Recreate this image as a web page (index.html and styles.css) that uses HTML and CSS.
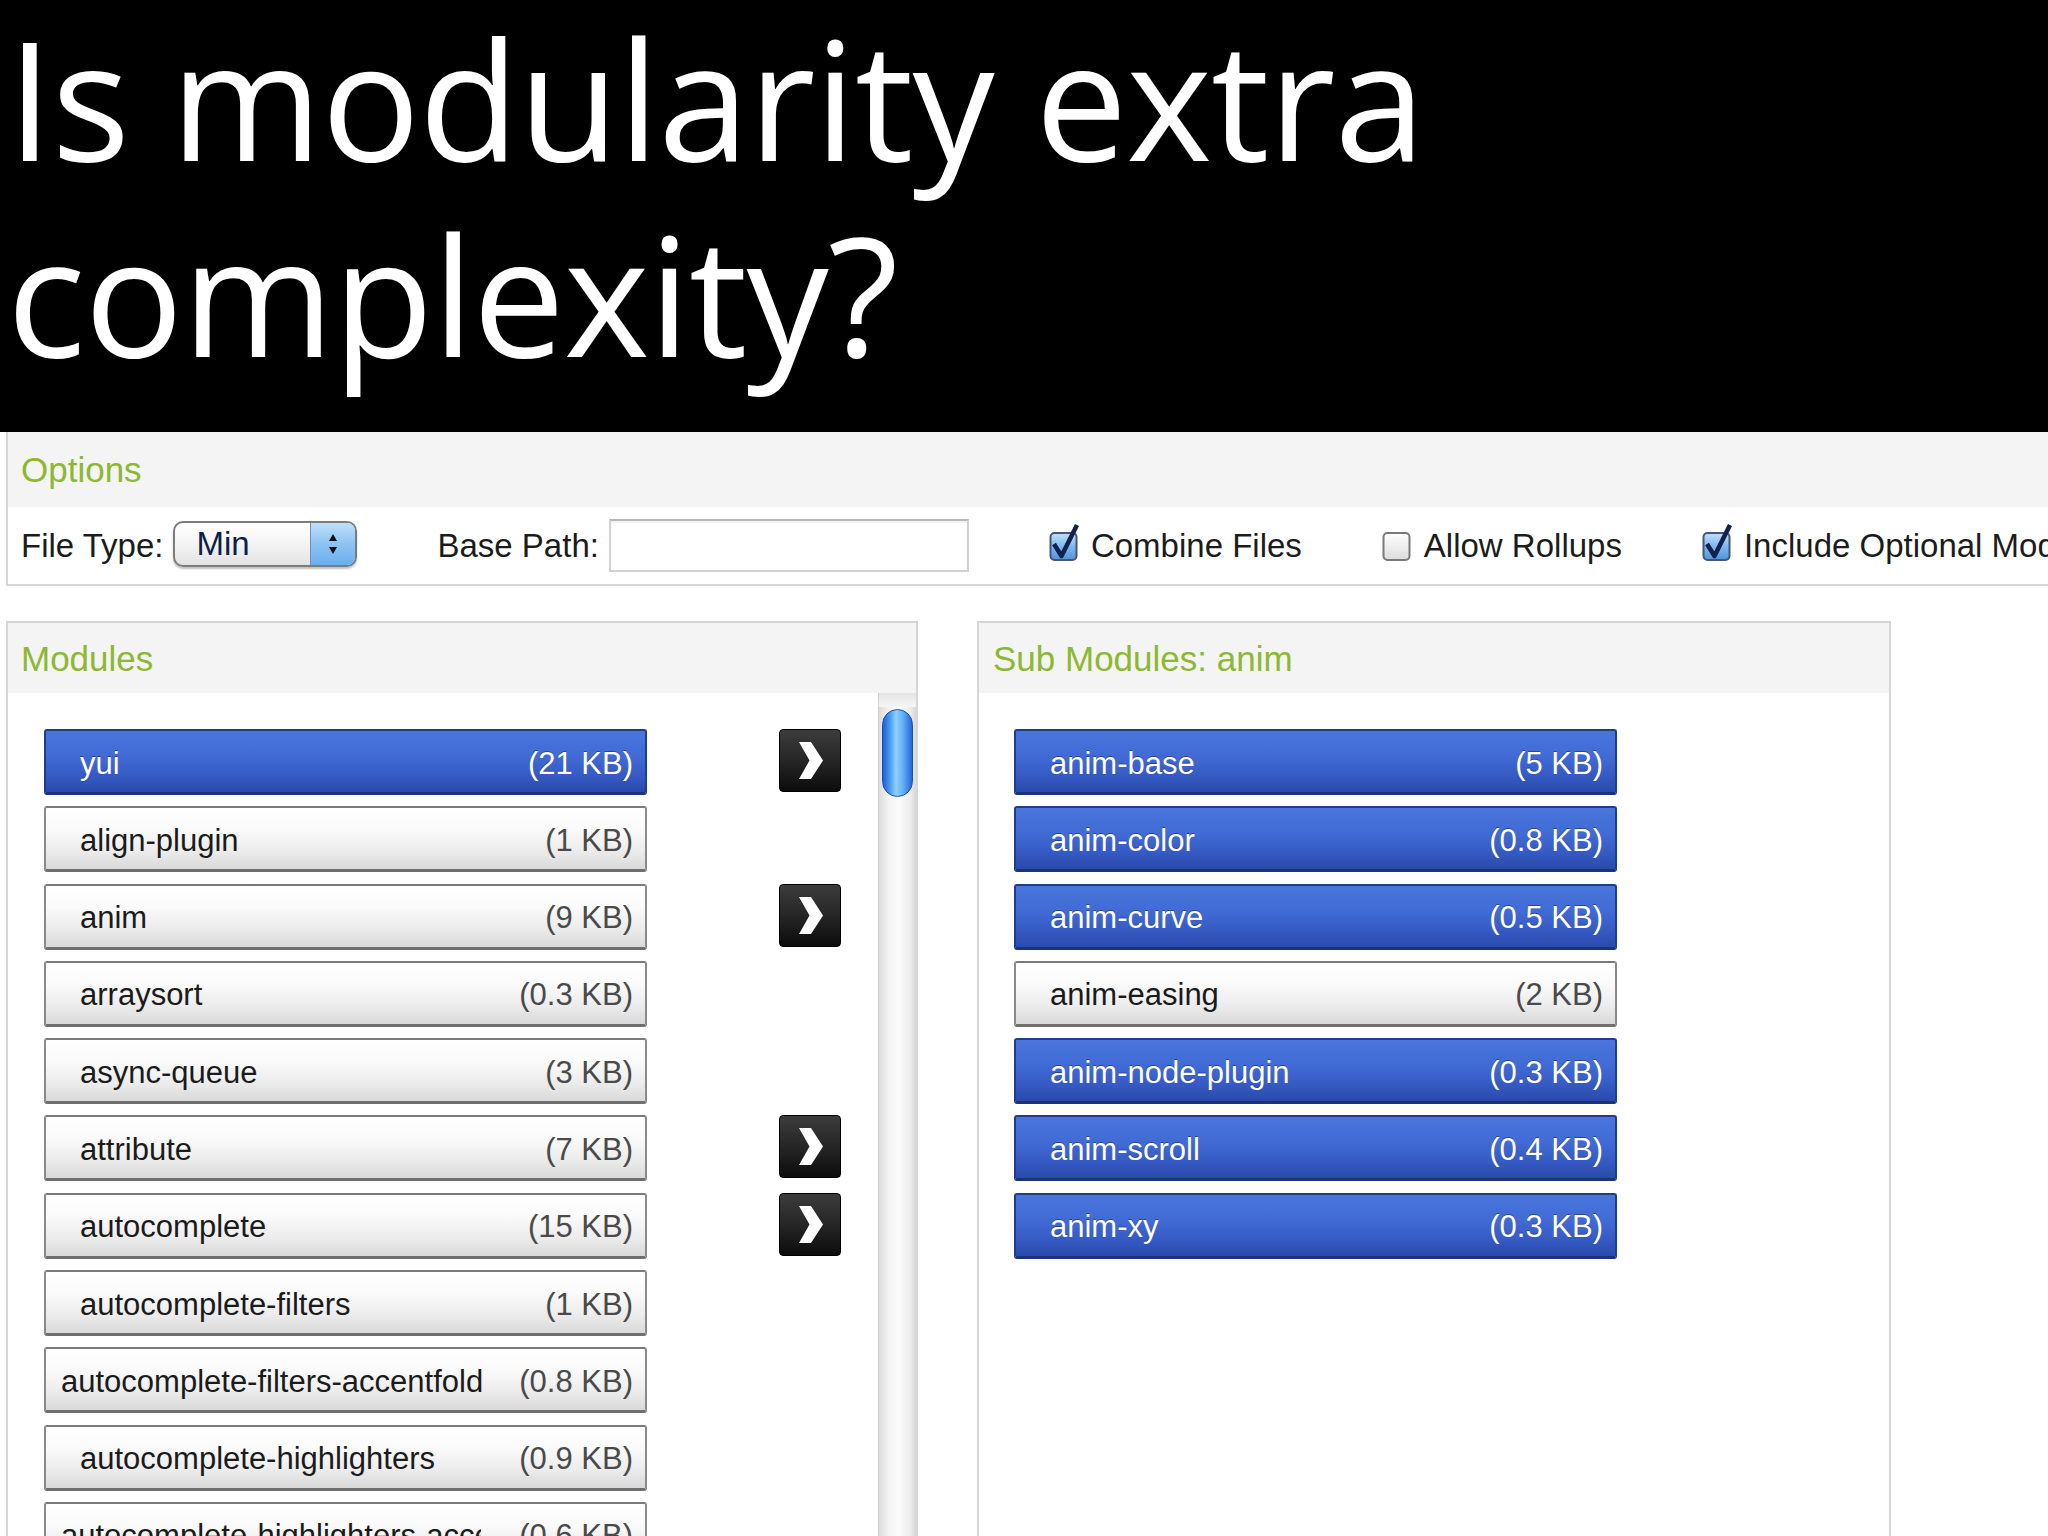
FILE: index.html
```html
<!DOCTYPE html>
<html>
<head>
<meta charset="utf-8">
<title>Is modularity extra complexity?</title>
<link rel="stylesheet" href="styles.css">
</head>
<body>
<header class="title">
  <h1>Is modularity extra<br>complexity?</h1>
</header>

<section class="options">
  <div class="options-head">Options</div>
  <div class="options-row">
    <div class="group">
      <span class="label">File Type:</span>
      <div class="select">
        <span class="select-value">Min</span>
        <span class="select-btn">
          <svg width="14" height="26" viewBox="0 0 14 26"><path d="M7 3 L11 10 L3 10 Z" fill="#111"/><path d="M3 16 L11 16 L7 23 Z" fill="#111"/></svg>
        </span>
      </div>
    </div>
    <div class="group">
      <span class="label">Base Path:</span>
      <div class="text-input"></div>
    </div>
    <div class="group">
      <svg class="cb" width="32" height="38" viewBox="0 -6 32 38">
        <defs><linearGradient id="cbOn" x1="0" y1="0" x2="0" y2="1"><stop offset="0" stop-color="#c2e0fa"/><stop offset="0.5" stop-color="#7fb8ee"/><stop offset="1" stop-color="#4f93dc"/></linearGradient></defs>
        <rect x="1.5" y="3" width="26" height="27" rx="4" fill="url(#cbOn)" stroke="#46557a" stroke-width="2"/>
        <path d="M5 14 L12.5 26 L28 -5" fill="none" stroke="#13224d" stroke-width="4.5" stroke-linejoin="round"/>
      </svg>
      <span class="label">Combine Files</span>
    </div>
    <div class="group">
      <svg class="cb" width="32" height="38" viewBox="0 -6 32 38">
        <defs><linearGradient id="cbOff" x1="0" y1="0" x2="0" y2="1"><stop offset="0" stop-color="#ffffff"/><stop offset="1" stop-color="#dcdcdc"/></linearGradient></defs>
        <rect x="1.5" y="3" width="26" height="27" rx="4" fill="url(#cbOff)" stroke="#7a7a7a" stroke-width="2"/>
      </svg>
      <span class="label">Allow Rollups</span>
    </div>
    <div class="group">
      <svg class="cb" width="32" height="38" viewBox="0 -6 32 38">
        <rect x="1.5" y="3" width="26" height="27" rx="4" fill="url(#cbOn)" stroke="#46557a" stroke-width="2"/>
        <path d="M5 14 L12.5 26 L28 -5" fill="none" stroke="#13224d" stroke-width="4.5" stroke-linejoin="round"/>
      </svg>
      <span class="label">Include Optional Modules</span>
    </div>
  </div>
</section>

<div class="panels">
  <section class="panel panel-modules">
    <div class="panel-head">Modules</div>
    <div class="panel-body">
      <div class="mod-list">
        <div class="row"><div class="item sel"><span class="name">yui</span><span class="size">(21 KB)</span></div><div class="arrow"><svg width="60" height="61" viewBox="0 0 60 61"><path d="M19 12 L31 12 L43 30.5 L31 49 L19 49 L29.5 30.5 Z" fill="#fff"/></svg></div></div>
        <div class="row"><div class="item"><span class="name">align-plugin</span><span class="size">(1 KB)</span></div></div>
        <div class="row"><div class="item"><span class="name">anim</span><span class="size">(9 KB)</span></div><div class="arrow"><svg width="60" height="61" viewBox="0 0 60 61"><path d="M19 12 L31 12 L43 30.5 L31 49 L19 49 L29.5 30.5 Z" fill="#fff"/></svg></div></div>
        <div class="row"><div class="item"><span class="name">arraysort</span><span class="size">(0.3 KB)</span></div></div>
        <div class="row"><div class="item"><span class="name">async-queue</span><span class="size">(3 KB)</span></div></div>
        <div class="row"><div class="item"><span class="name">attribute</span><span class="size">(7 KB)</span></div><div class="arrow"><svg width="60" height="61" viewBox="0 0 60 61"><path d="M19 12 L31 12 L43 30.5 L31 49 L19 49 L29.5 30.5 Z" fill="#fff"/></svg></div></div>
        <div class="row"><div class="item"><span class="name">autocomplete</span><span class="size">(15 KB)</span></div><div class="arrow"><svg width="60" height="61" viewBox="0 0 60 61"><path d="M19 12 L31 12 L43 30.5 L31 49 L19 49 L29.5 30.5 Z" fill="#fff"/></svg></div></div>
        <div class="row"><div class="item"><span class="name">autocomplete-filters</span><span class="size">(1 KB)</span></div></div>
        <div class="row"><div class="item long"><span class="name">autocomplete-filters-accentfold</span><span class="size">(0.8 KB)</span></div></div>
        <div class="row"><div class="item"><span class="name">autocomplete-highlighters</span><span class="size">(0.9 KB)</span></div></div>
        <div class="row"><div class="item long"><span class="name clip">autocomplete-highlighters-accentfold</span><span class="size">(0.6 KB)</span></div></div>
      </div>
      <div class="scroll">
        <div class="scroll-cap"></div>
        <div class="thumb"></div>
      </div>
    </div>
  </section>

  <section class="panel panel-sub">
    <div class="panel-head">Sub Modules: anim</div>
    <div class="panel-body sub-body">
      <div class="mod-list">
        <div class="row"><div class="item sel"><span class="name">anim-base</span><span class="size">(5 KB)</span></div></div>
        <div class="row"><div class="item sel"><span class="name">anim-color</span><span class="size">(0.8 KB)</span></div></div>
        <div class="row"><div class="item sel"><span class="name">anim-curve</span><span class="size">(0.5 KB)</span></div></div>
        <div class="row"><div class="item"><span class="name">anim-easing</span><span class="size">(2 KB)</span></div></div>
        <div class="row"><div class="item sel"><span class="name">anim-node-plugin</span><span class="size">(0.3 KB)</span></div></div>
        <div class="row"><div class="item sel"><span class="name">anim-scroll</span><span class="size">(0.4 KB)</span></div></div>
        <div class="row"><div class="item sel"><span class="name">anim-xy</span><span class="size">(0.3 KB)</span></div></div>
      </div>
    </div>
  </section>
</div>
</body>
</html>
```
FILE: styles.css
```css
html, body {
  margin: 0;
  padding: 0;
  width: 2048px;
  height: 1536px;
  overflow: hidden;
  background: #fff;
  font-family: "Liberation Sans", Arial, sans-serif;
  color: #1a1a1a;
}

/* ---------- title ---------- */
.title {
  height: 432px;
  background: #000;
  color: #fff;
  padding-left: 7px;
  box-sizing: border-box;
  overflow: hidden;
}
.title h1 {
  margin: 0;
  font-family: "Open Sans", sans-serif;
  font-weight: 400;
  font-size: 164px;
  line-height: 196px;
  letter-spacing: -1px;
  white-space: nowrap;
}

/* ---------- options ---------- */
.options {
  margin-left: 6px;
  border-left: 2px solid #d6d6d6;
  border-bottom: 2px solid #d6d6d6;
  overflow: hidden;
  white-space: nowrap;
}
.options-head {
  height: 75px;
  line-height: 75px;
  padding-left: 13px;
  background: #f4f4f4;
  color: #8cb832;
  font-size: 35px;
}
.options-row {
  height: 77px;
  display: flex;
  align-items: center;
  padding-left: 13px;
  gap: 80px;
  background: #fff;
}
.group {
  display: flex;
  align-items: center;
  gap: 10px;
  flex: none;
}
.label {
  font-size: 33px;
  color: #1c1c1c;
}
.select {
  width: 184px;
  height: 46px;
  box-sizing: border-box;
  border: 2px solid #7c7c7c;
  border-radius: 10px;
  display: flex;
  overflow: hidden;
  background: linear-gradient(#ffffff, #f4f4f4 50%, #e2e2e2);
  box-shadow: 0 2px 2px rgba(0,0,0,0.25);
  margin-top: -3px;
}
.select-value {
  flex: 1;
  font-size: 33px;
  line-height: 42px;
  padding-left: 21px;
  color: #0c1e4a;
}
.select-btn {
  width: 44px;
  display: flex;
  align-items: center;
  justify-content: center;
  background: linear-gradient(#bfe0fa, #8cc3f2 50%, #6aaeee);
  border-left: 1px solid #6f8fc0;
}
.text-input {
  width: 360px;
  height: 53px;
  box-sizing: border-box;
  border: 2px solid #d2d2d2;
  border-top-color: #b8b8b8;
  background: #fff;
  box-shadow: inset 0 2px 2px rgba(0,0,0,0.06);
}
.cb {
  display: block;
  margin-top: -6px;
}

/* ---------- panels ---------- */
.panels {
  display: flex;
  gap: 59px;
  margin: 35px 0 0 6px;
}
.panel {
  box-sizing: border-box;
  height: 1000px;
  border: 2px solid #d6d6d6;
  border-bottom: none;
  background: #fff;
  flex: none;
}
.panel-modules { width: 912px; }
.panel-sub { width: 914px; }
.panel-head {
  height: 70px;
  line-height: 72px;
  padding-left: 13px;
  background: #f4f4f4;
  color: #8cb832;
  font-size: 35px;
}
.panel-sub .panel-head { padding-left: 14px; }
.panel-body {
  display: flex;
  height: 928px;
}
.mod-list {
  flex: 1;
  padding: 36px 0 0 36px;
}
.sub-body .mod-list { padding-left: 35px; }

.row {
  display: flex;
  align-items: flex-start;
  gap: 132px;
  margin-bottom: 11.3px;
}
.item {
  width: 603px;
  height: 66px;
  box-sizing: border-box;
  flex: none;
  display: flex;
  align-items: center;
  justify-content: space-between;
  padding: 4px 12px 0 24px;
  border: 2px solid #8a8a8a;
  border-top-color: #7a7a7a;
  border-bottom: 3px solid #6f6f6f;
  border-radius: 3px;
  background: linear-gradient(#ffffff 0%, #fafafa 35%, #ececec 70%, #d9d9d9 100%);
  font-size: 31px;
  color: #1b1b1b;
  white-space: nowrap;
}
.item .name { padding-left: 10px; }
.item .size { color: #4a4a4a; }
.item.long { padding-left: 5px; }
.item .name.clip {
  width: 420px;
  overflow: hidden;
  flex: none;
}
.item.sel {
  border-color: #1f3d8e;
  border-bottom-color: #1b3478;
  background: linear-gradient(#4a76dc 0%, #4069d4 45%, #3559c2 75%, #2a4aab 100%);
  color: #fff;
  text-shadow: 0 -1px 0 rgba(0,0,0,0.35);
}
.item.sel .size { color: #fff; }

.arrow {
  width: 62px;
  height: 63px;
  box-sizing: border-box;
  flex: none;
  border: 1px solid #000;
  border-radius: 4px;
  background: linear-gradient(#3c3c3c 0%, #262626 50%, #0c0c0c 100%);
  display: flex;
  align-items: center;
  justify-content: center;
}
.arrow svg { display: block; }

/* scrollbar */
.scroll {
  width: 37px;
  flex: none;
  background: linear-gradient(90deg, #dcdcdc 0%, #f3f3f3 25%, #fbfbfb 55%, #ececec 85%, #d8d8d8 100%);
  border-left: 1px solid #cfcfcf;
}
.scroll-cap {
  height: 14px;
  background: linear-gradient(#e4e4e4, #f6f6f6);
}
.thumb {
  width: 31px;
  height: 88px;
  margin: 2px 0 0 3px;
  border-radius: 16px;
  box-sizing: border-box;
  border: 1px solid #1b4fb8;
  background: linear-gradient(90deg, #1d5fd8 0%, #4e9df0 25%, #8fd0fb 45%, #5eaef5 70%, #2266d6 100%);
}
```
